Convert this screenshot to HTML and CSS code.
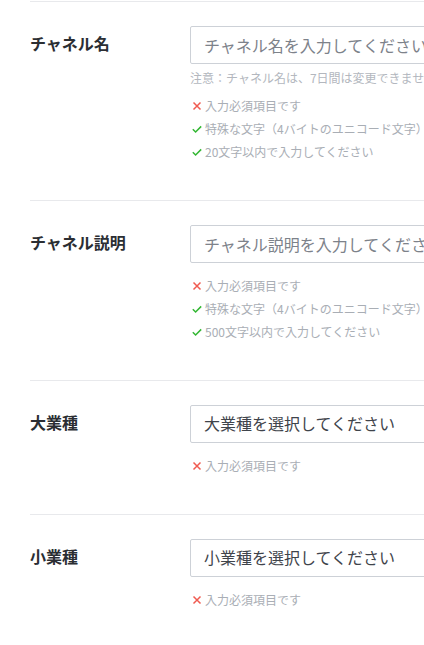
FILE: index.html
```html
<!doctype html>
<html lang="ja">
<head>
  <meta charset="utf-8">
  <title>チャネル設定</title>
  <link rel="stylesheet" href="styles.css">
</head>
<body>
  <div class="form">
    <div class="row">
      <div class="label">チャネル名</div>
      <div class="field">
        <input class="input" type="text" placeholder="チャネル名を入力してください">
        <div class="note">注意：チャネル名は、7日間は変更できません。</div>
        <ul class="rules">
          <li class="ng"><svg viewBox="0 0 10 10"><path d="M1.5 1.5l7 7M8.5 1.5l-7 7"/></svg>入力必須項目です</li>
          <li class="ok"><svg viewBox="0 0 10 10"><path d="M0.8 5.2l2.8 2.8 5.6-5.6"/></svg>特殊な文字（4バイトのユニコード文字）は使用できません</li>
          <li class="ok"><svg viewBox="0 0 10 10"><path d="M0.8 5.2l2.8 2.8 5.6-5.6"/></svg>20文字以内で入力してください</li>
        </ul>
      </div>
    </div>
    <div class="row">
      <div class="label">チャネル説明</div>
      <div class="field">
        <input class="input" type="text" placeholder="チャネル説明を入力してください">
        <ul class="rules">
          <li class="ng"><svg viewBox="0 0 10 10"><path d="M1.5 1.5l7 7M8.5 1.5l-7 7"/></svg>入力必須項目です</li>
          <li class="ok"><svg viewBox="0 0 10 10"><path d="M0.8 5.2l2.8 2.8 5.6-5.6"/></svg>特殊な文字（4バイトのユニコード文字）は使用できません</li>
          <li class="ok"><svg viewBox="0 0 10 10"><path d="M0.8 5.2l2.8 2.8 5.6-5.6"/></svg>500文字以内で入力してください</li>
        </ul>
      </div>
    </div>
    <div class="row">
      <div class="label">大業種</div>
      <div class="field">
        <div class="input select">大業種を選択してください</div>
        <ul class="rules">
          <li class="ng"><svg viewBox="0 0 10 10"><path d="M1.5 1.5l7 7M8.5 1.5l-7 7"/></svg>入力必須項目です</li>
        </ul>
      </div>
    </div>
    <div class="row">
      <div class="label">小業種</div>
      <div class="field">
        <div class="input select">小業種を選択してください</div>
        <ul class="rules">
          <li class="ng"><svg viewBox="0 0 10 10"><path d="M1.5 1.5l7 7M8.5 1.5l-7 7"/></svg>入力必須項目です</li>
        </ul>
      </div>
    </div>
  </div>
</body>
</html>
```
FILE: styles.css
```css
html, body{
    margin: 0;
    overflow: hidden;
    background: #fff;
}
body{
    font-family: "Noto Sans CJK JP", "Noto Sans", sans-serif;
    color: #2b2e33;
}
.form{
    padding-top: 1px;
    margin-left: 30px;
    width: 600px;
}
.row{
    display: flex;
    border-top: 1px solid #e8e9ec;
    padding: 24px 0 37px;
}
.label{
    width: 160px;
    flex-shrink: 0;
    font-size: 16px;
    font-weight: bold;
    line-height: 35px;
}
.field{
    width: 400px;
    flex-shrink: 0;
}
.input{
    display: block;
    box-sizing: border-box;
    width: 100%;
    height: 38px;
    margin: 0;
    padding: 0 13px;
    border: 1px solid #cdd1d7;
    border-radius: 2px;
    font-family: inherit;
    font-size: 16px;
    line-height: 35px;
    color: #3f444b;
    outline: none;
}
.input::placeholder{
    color: #7d828a;
}
.select{
    color: #3f444b;
}
.note{
    margin-top: 4px;
    font-size: 12px;
    line-height: 20px;
    color: #b3b7be;
    white-space: nowrap;
}
.rules{
    list-style: none;
    margin: 11px 0 0;
    padding: 0;
}
.note + .rules{
    margin-top: 6px;
}
.rules li{
    display: flex;
    align-items: center;
    font-size: 12px;
    line-height: 23px;
    height: 23px;
    color: #a9aeb5;
    white-space: nowrap;
}
.rules svg{
    width: 10px;
    height: 10px;
    margin: 0 3px 0 2px;
    fill: none;
    stroke-width: 1.5;
}
.ng svg{
    stroke: #f05a50;
}
.ok svg{
    stroke: #33b733;
}
```
